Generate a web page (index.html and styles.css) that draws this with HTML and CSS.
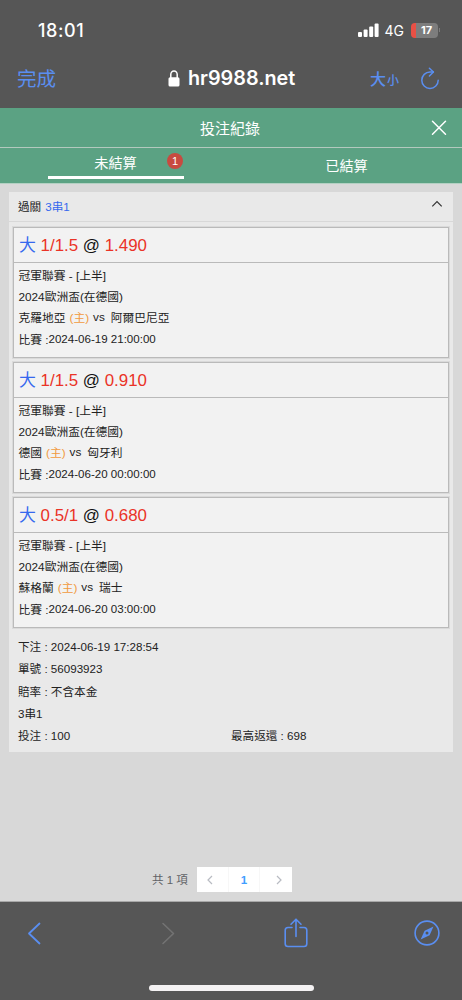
FILE: index.html
```html
<!DOCTYPE html>
<html lang="zh-Hant">
<head>
    <meta charset="UTF-8">
    <meta name="viewport" content="width=device-width, initial-scale=1.0">
    <title>投注紀錄</title>
    <link rel="stylesheet" href="styles.css">
</head>
<body>
    <div class="status-bar">
        <span class="clock">18:01</span>
        <div class="status-icons">
            <svg class="signal" width="21" height="14" viewBox="0 0 21 14" fill="#fff">
                <rect x="0" y="9" width="4" height="5" rx="1"/>
                <rect x="5.6" y="6.6" width="4" height="7.4" rx="1"/>
                <rect x="11.2" y="3.6" width="4" height="10.4" rx="1"/>
                <rect x="16.6" y="0.5" width="4" height="13.5" rx="1"/>
            </svg>
            <span class="network">4G</span>
            <div class="battery">17</div>
            <div class="battery-cap"></div>
        </div>
    </div>

    <div class="browser-bar">
        <span class="done">完成</span>
        <div class="address">
            <svg width="12" height="17" viewBox="0 0 12 17">
                <rect x="0.5" y="7.2" width="11" height="9.3" rx="1.6" fill="#fff"/>
                <path d="M2.8 8V4.6a3.2 3.6 0 0 1 6.4 0V8" fill="none" stroke="#fff" stroke-width="1.5"/>
            </svg>
            <span>hr9988.net</span>
        </div>
        <span class="text-size">大<small>小</small></span>
        <svg class="reload" width="20" height="23" viewBox="0 0 20 23" fill="none" stroke="#5a8ef0" stroke-width="1.5" stroke-linecap="round" stroke-linejoin="round">
            <path d="M13.4 5H10a8.2 8.2 0 1 0 8.2 8.2"/>
            <path d="M9.4 1.2L13.4 5L9.4 9"/>
        </svg>
    </div>

    <header>
        <h1>投注紀錄</h1>
        <svg class="close-icon" width="16" height="16" viewBox="0 0 16 16" stroke="#fff" stroke-width="1.5" stroke-linecap="round">
            <path d="M1.5 1.2L14.5 14.2M14.5 1.2L1.5 14.2"/>
        </svg>
    </header>

    <nav class="tabs">
        <div class="tab active">
            <span class="tab-label">未結算</span>
            <span class="badge">1</span>
        </div>
        <div class="tab"><span class="tab-label">已結算</span></div>
    </nav>

    <main class="content">
        <section class="record">
            <div class="record-header">
                <span>過關</span>
                <span class="blue">3串1</span>
                <svg class="chevron" width="12" height="8" viewBox="0 0 12 8" fill="none" stroke="#333" stroke-width="1.2">
                    <path d="M1.3 6.3L6 1.6L10.7 6.3"/>
                </svg>
            </div>

            <div class="bet-list">
                <div class="bet-card">
                    <div class="bet-title"><span class="blue">大</span> <span class="red">1/1.5</span> @ <span class="red">1.490</span></div>
                    <div class="bet-body">
                        <div class="row">冠軍聯賽 - [上半]</div>
                        <div class="row">2024歐洲盃(在德國)</div>
                        <div class="row teams"><span>克羅地亞</span><span class="home">(主)</span><span class="vs">vs</span><span>阿爾巴尼亞</span></div>
                        <div class="row">比賽 :<span class="time">2024-06-19 21:00:00</span></div>
                    </div>
                </div>

                <div class="bet-card">
                    <div class="bet-title"><span class="blue">大</span> <span class="red">1/1.5</span> @ <span class="red">0.910</span></div>
                    <div class="bet-body">
                        <div class="row">冠軍聯賽 - [上半]</div>
                        <div class="row">2024歐洲盃(在德國)</div>
                        <div class="row teams"><span>德國</span><span class="home">(主)</span><span class="vs">vs</span><span>匈牙利</span></div>
                        <div class="row">比賽 :<span class="time">2024-06-20 00:00:00</span></div>
                    </div>
                </div>

                <div class="bet-card">
                    <div class="bet-title"><span class="blue">大</span> <span class="red">0.5/1</span> @ <span class="red">0.680</span></div>
                    <div class="bet-body">
                        <div class="row">冠軍聯賽 - [上半]</div>
                        <div class="row">2024歐洲盃(在德國)</div>
                        <div class="row teams"><span>蘇格蘭</span><span class="home">(主)</span><span class="vs">vs</span><span>瑞士</span></div>
                        <div class="row">比賽 :<span class="time">2024-06-20 03:00:00</span></div>
                    </div>
                </div>
            </div>

            <div class="summary">
                <div>下注 : 2024-06-19 17:28:54</div>
                <div>單號 : 56093923</div>
                <div>賠率 : 不含本金</div>
                <div>3串1</div>
                <div class="summary-split"><span>投注 : 100</span><span>最高返還 : 698</span></div>
            </div>
        </section>

        <div class="pagination">
            <span class="total">共 1 項</span>
            <div class="pager">
                <span class="page-item">
                    <svg width="6" height="10" viewBox="0 0 6 10" fill="none" stroke="#b8bbc2" stroke-width="1.2"><path d="M5 1L1 5L5 9"/></svg>
                </span>
                <span class="page-item current">1</span>
                <span class="page-item next">
                    <svg width="6" height="10" viewBox="0 0 6 10" fill="none" stroke="#b8bbc2" stroke-width="1.2"><path d="M1 1L5 5L1 9"/></svg>
                </span>
            </div>
        </div>
    </main>

    <footer>
        <div class="toolbar">
            <svg width="14" height="23" viewBox="0 0 14 23" fill="none" stroke="#5a8ef0" stroke-width="1.8" stroke-linecap="round" stroke-linejoin="round">
                <path d="M12.5 1.5L2 11.5L12.5 21.5"/>
            </svg>
            <svg class="forward" width="14" height="23" viewBox="0 0 14 23" fill="none" stroke="#737373" stroke-width="1.6" stroke-linecap="round" stroke-linejoin="round">
                <path d="M2 1.5L12.5 11.5L2 21.5"/>
            </svg>
            <svg class="share" width="24" height="30" viewBox="0 0 24 30" fill="none" stroke="#5a8ef0" stroke-width="1.6" stroke-linecap="round" stroke-linejoin="round">
                <path d="M8 9.5H4a2.8 2.8 0 0 0-2.8 2.8v13.4A2.8 2.8 0 0 0 4 28.5h16a2.8 2.8 0 0 0 2.8-2.8V12.3A2.8 2.8 0 0 0 20 9.5h-4"/>
                <path d="M12 18.5V1.5M7 6.2L12 1.2L17 6.2"/>
            </svg>
            <svg width="26" height="26" viewBox="0 0 26 26">
                <circle cx="13" cy="13" r="11.9" fill="none" stroke="#5a8ef0" stroke-width="1.6"/>
                <path d="M19.5 6.6L15.6 15.2L6.6 19.5L10.6 10.7Z" fill="#5a8ef0"/>
                <circle cx="13" cy="13" r="1.5" fill="#555"/>
            </svg>
        </div>
        <div class="home-indicator"></div>
    </footer>
</body>
</html>
```
FILE: styles.css
```css
* {
    box-sizing: border-box;
}
body {
    margin: 0;
    height: 1000px;
    display: flex;
    flex-direction: column;
    overflow: hidden;
    background-color: #565656;
    color: #222;
    font-family: "Liberation Sans", "Noto Sans CJK TC", sans-serif;
    font-size: 11.6px;
}
svg {
    display: block;
    flex: none;
}
.blue {
    color: #3668ee;
}
.red {
    color: #ea3327;
}
.status-bar {
    height: 58px;
    display: flex;
    justify-content: space-between;
    padding: 2px 22px 0 38px;
    align-items: center;
    color: #fff;
    font-family: Inter, sans-serif;
}
.clock {
    font-size: 18px;
    font-weight: 500;
    letter-spacing: 0.6px;
}
.status-icons {
    display: flex;
    align-items: center;
}
.signal {
    margin-right: 6px;
}
.network {
    font-size: 14px;
    margin-right: 7px;
}
.battery {
    width: 27px;
    height: 15px;
    padding-left: 4px;
    border-radius: 4px;
    background: linear-gradient(to right, #e85045 5px, #7d7d7d 5px);
    font-size: 11px;
    font-weight: 700;
    line-height: 15px;
    text-align: center;
}
.battery-cap {
    width: 1px;
    height: 4px;
    margin-left: 1px;
    background-color: #7d7d7d;
}
.browser-bar {
    height: 50px;
    display: flex;
    align-items: center;
    padding: 0 22px 10px 17px;
    color: #5a8ef0;
}
.done {
    width: 151px;
    font-size: 19.5px;
    line-height: 24px;
    padding-top: 1px;
}
.address {
    width: 202px;
    display: flex;
    align-items: center;
    gap: 8px;
    color: #fff;
    font-family: Inter, sans-serif;
    font-size: 19.8px;
    font-weight: 600;
}
.text-size {
    font-size: 16px;
    font-weight: 500;
}
.text-size small {
    font-size: 12px;
    margin-left: 1px;
}
.reload {
    margin-left: auto;
}
header {
    height: 40px;
    display: flex;
    align-items: center;
    padding: 0 15px 0 200px;
    background-color: #5ba283;
    border-bottom: 1px solid #b3c9be;
    color: #fff;
}
h1 {
    margin: 0;
    font-size: 15px;
    font-weight: 400;
}
.close-icon {
    margin-left: auto;
}
.tabs {
    height: 36px;
    display: flex;
    background-color: #5ba283;
    border-bottom: 1px solid #b3d0c2;
    color: #fff;
    font-size: 14.2px;
}
.tab {
    width: 50%;
    display: flex;
    justify-content: center;
}
.tab-label {
    width: 136px;
    height: 35px;
    line-height: 36px;
    text-align: center;
}
.active {
    position: relative;
}
.active .tab-label {
    height: 31px;
    line-height: 30px;
    border-bottom: 3px solid #fff;
}
.badge {
    position: absolute;
    top: 5px;
    left: 167px;
    width: 16px;
    height: 16px;
    border-radius: 50%;
    background-color: #c84a40;
    font-size: 11px;
    line-height: 16px;
    text-align: center;
}
.content {
    height: 718px;
    display: flex;
    flex-direction: column;
    padding: 8px 9px 0;
    background-color: #d8d8d8;
    border-bottom: 1px solid #a8a8a8;
}
.record {
    height: 560px;
    background-color: #e9e9e9;
}
.record-header {
    height: 30px;
    display: flex;
    align-items: center;
    gap: 4px;
    padding: 0 10px 2px 9px;
    border-bottom: 1px solid #d8d8d8;
}
.chevron {
    margin: 0 0 3px auto;
}
.bet-list {
    display: flex;
    flex-direction: column;
    gap: 4px;
    padding: 5px 4px 0;
}
.bet-card {
    height: 131px;
    border: 1px solid #bababa;
    outline: 1px solid rgba(186, 186, 186, 0.3);
    background-color: #f2f2f2;
}
.bet-title {
    height: 35px;
    padding-left: 5px;
    border-bottom: 1px solid #bababa;
    color: #111;
    font-size: 16.9px;
    line-height: 36px;
}
.bet-body {
    padding: 2px 4.5px 0;
    font-size: 11.75px;
}
.row {
    height: 21.2px;
    line-height: 21.2px;
    white-space: nowrap;
}
.teams {
    display: flex;
}
.home {
    margin-left: 4px;
    color: #f19a3e;
}
.vs {
    margin: -1px 6px 0 4px;
}
.time {
    position: relative;
    top: -1px;
    font-size: 11.55px;
}
.summary {
    padding: 8px 9px 0;
    line-height: 22.3px;
}
.summary-split {
    display: grid;
    grid-template-columns: 1fr 1fr;
}
.pagination {
    display: flex;
    align-items: center;
    margin-top: 115px;
    padding-left: 143px;
    color: #606266;
}
.total {
    width: 45px;
    padding-bottom: 2px;
    font-size: 11.5px;
    white-space: nowrap;
}
.pager {
    display: flex;
    width: 95px;
    height: 25px;
    background-color: #fff;
}
.page-item {
    width: 31px;
    display: flex;
    align-items: center;
    justify-content: center;
    padding-right: 6px;
}
.current {
    width: 32px;
    padding: 0;
    border: solid #f7f7f7;
    border-width: 0 1px;
    color: #409eff;
    font-weight: bold;
}
.next {
    padding: 0 0 0 7px;
}
footer {
    flex: 1;
    display: flex;
    flex-direction: column;
    align-items: center;
    justify-content: space-between;
    padding: 14px 22px 9px 27px;
}
.toolbar {
    width: 100%;
    display: flex;
    align-items: center;
    height: 34px;
}
.forward {
    margin-left: 120px;
}
.share {
    margin: 0 106px 0 109px;
}
.home-indicator {
    width: 165px;
    height: 6px;
    margin-right: 5px;
    border-radius: 3px;
    background-color: #f4f2f3;
}
```
